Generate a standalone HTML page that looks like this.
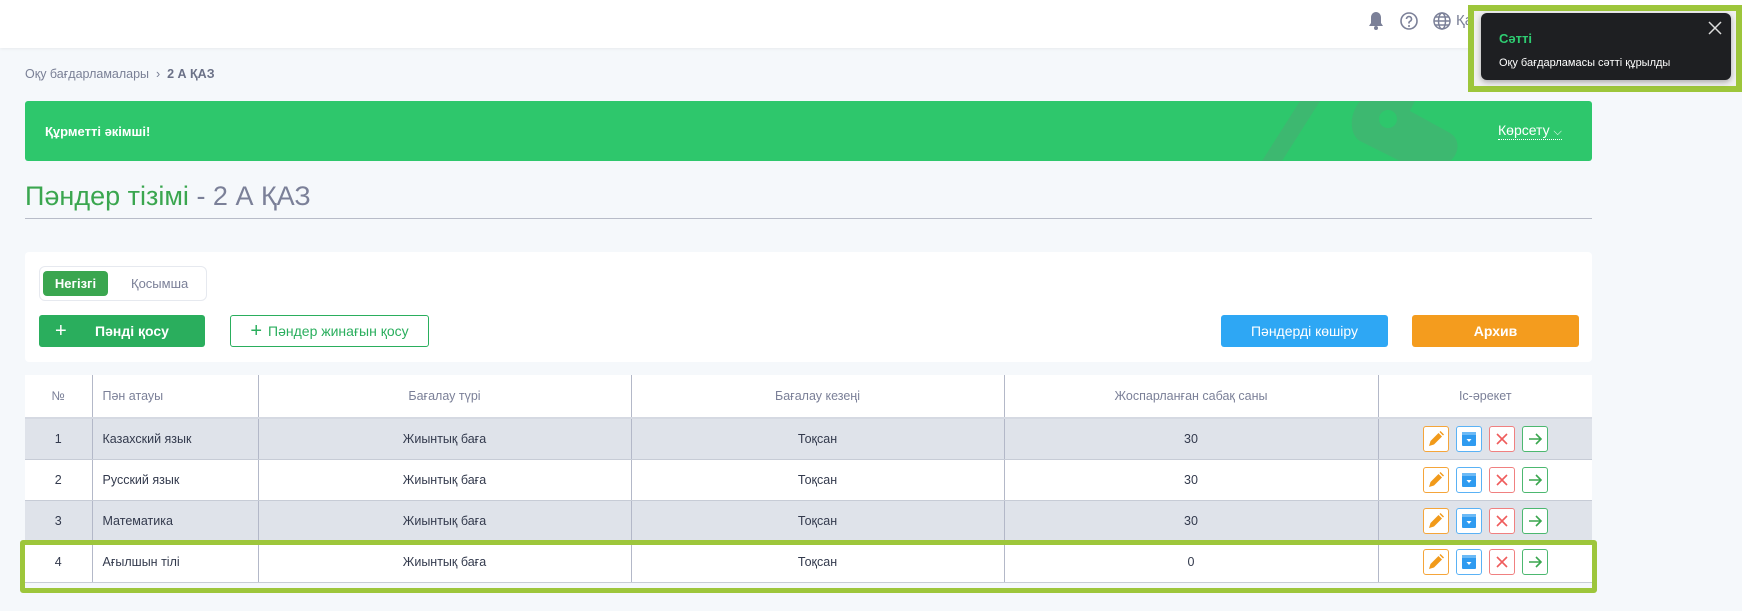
<!DOCTYPE html>
<html><head><meta charset="utf-8"><style>
*{box-sizing:border-box;margin:0;padding:0}
body{width:1742px;height:611px;background:#f5f8fb;font-family:"Liberation Sans","DejaVu Sans",sans-serif;position:relative;overflow:hidden;color:#3b4256}
.abs{position:absolute}
.hdr{left:0;top:0;width:1742px;height:48px;background:#fff;box-shadow:0 1px 3px rgba(0,0,0,.06)}
.bc{left:25px;top:67px;font-size:12.5px;color:#7a8096}
.bc b{color:#6b7187}
.banner{left:25px;top:101px;width:1567px;height:60px;background:#2ec76c;border-radius:3px;overflow:hidden}
.title{left:25px;top:181px;font-size:27px;color:#3aa64f}
.title span{color:#7b8098}
.uline{left:25px;top:218px;width:1567px;height:1px;background:#b8bcc8}
.card{left:25px;top:252px;width:1567px;height:110px;background:#fff;border-radius:4px}
.btn{position:absolute;height:32px;border-radius:3px;font-size:14px;display:flex;align-items:center;justify-content:center}
table{position:absolute;left:25px;top:375px;width:1567px;border-collapse:collapse;background:#fff;font-size:12.5px}
td,th{border-left:1px solid #b3b8c8;text-align:center;height:41px;color:#333a4d;font-weight:normal}
th{height:43px;color:#7b8098;border-bottom:2px solid #d5d9e2}
td:first-child,th:first-child{border-left:none}
tr.g td{background:#dfe3ea}
tr td{border-bottom:1px solid #c7ccd6}
.l{text-align:left;padding-left:10px}
.acts{display:flex;gap:7px;justify-content:center}
.a{width:26px;height:26px;border:1.5px solid;border-radius:3px;display:flex;align-items:center;justify-content:center;background:#fff}
</style></head><body>
<div class="abs hdr"></div>
<svg class="abs" style="left:1367px;top:11px" width="18" height="20" viewBox="0 0 18 20"><path d="M9 1c-3 0-5 2.5-5 5.5V12L2 15h14l-2-3V6.5C14 3.5 12 1 9 1z" fill="#7b8098"/><circle cx="9" cy="17" r="2" fill="#7b8098"/></svg>
<svg class="abs" style="left:1399px;top:11px" width="20" height="20" viewBox="0 0 20 20"><circle cx="10" cy="10" r="8" fill="none" stroke="#7b8098" stroke-width="1.6"/><path d="M7.5 8a2.5 2.5 0 1 1 3.5 2.3c-.7.3-1 .8-1 1.5V12.5" fill="none" stroke="#7b8098" stroke-width="1.6"/><circle cx="10" cy="15" r="1" fill="#7b8098"/></svg>
<svg class="abs" style="left:1432px;top:11px" width="20" height="20" viewBox="0 0 20 20" fill="none" stroke="#7b8098" stroke-width="1.5"><circle cx="10" cy="10" r="8"/><ellipse cx="10" cy="10" rx="3.5" ry="8"/><path d="M2 10h16M3.5 6h13M3.5 14h13"/></svg>
<div class="abs" style="left:1456px;top:12px;font-size:15px;color:#7b8098">Қазақша</div>
<div class="abs bc">Оқу бағдарламалары &nbsp;›&nbsp; <b>2 А ҚАЗ</b></div>
<div class="abs banner">
<svg class="abs" style="left:1180px;top:0" width="260" height="60"><path d="M95 0h20l-38 60h-20z" fill="#3db870"/><path d="M155 0h55l-5 10 40 22c10 6 10 20 0 28h-50l-40-20c-10-6-12-25 0-40z" fill="#3db870"/><circle cx="183" cy="18" r="9" fill="#2ec76c"/></svg>
<div class="abs" style="left:20px;top:23px;color:#fff;font-weight:bold;font-size:13px">Құрметті әкімші!</div>
<div class="abs" style="left:1473px;top:21px;color:#fff;font-size:14px;border-bottom:1px dotted #fff">Көрсету <span style="font-size:11px">⌵</span></div>
</div>
<div class="abs title">Пәндер тізімі <span>- 2 А ҚАЗ</span></div>
<div class="abs uline"></div>
<div class="abs card"></div>
<div class="abs" style="left:39px;top:266px;width:168px;height:35px;border:1px solid #e6e9ef;border-radius:6px;background:#fff"></div>
<div class="abs" style="left:43px;top:271px;width:65px;height:25px;background:#3aa64f;border-radius:4px;color:#fff;font-weight:bold;font-size:13px;text-align:center;line-height:25px">Негізгі</div>
<div class="abs" style="left:131px;top:276px;color:#7b8098;font-size:13px">Қосымша</div>
<div class="btn" style="left:39px;top:315px;width:166px;background:#2aae5d;color:#fff;font-weight:bold"><span style="position:absolute;left:16px;font-size:20px;font-weight:normal">+</span><span style="margin-left:20px">Пәнді қосу</span></div>
<div class="btn" style="left:230px;top:315px;width:199px;border:1.5px solid #2aae5d;color:#2aae5d;background:#fff"><span style="font-size:20px;margin-right:6px">+</span>Пәндер жинағын қосу</div>
<div class="btn" style="left:1221px;top:315px;width:167px;background:#2ea7f4;color:#fff">Пәндерді көшіру</div>
<div class="btn" style="left:1412px;top:315px;width:167px;background:#f49c1e;color:#fff;font-weight:bold">Архив</div>
<table>
<tr><th style="width:67px">№</th><th class="l" style="width:166px">Пән атауы</th><th style="width:373px">Бағалау түрі</th><th style="width:373px">Бағалау кезеңі</th><th style="width:374px">Жоспарланған сабақ саны</th><th>Іс-әрекет</th></tr>
<tr class="g"><td>1</td><td class="l">Казахский язык</td><td>Жиынтық баға</td><td>Тоқсан</td><td>30</td><td>ACT</td></tr>
<tr><td>2</td><td class="l">Русский язык</td><td>Жиынтық баға</td><td>Тоқсан</td><td>30</td><td>ACT</td></tr>
<tr class="g"><td>3</td><td class="l">Математика</td><td>Жиынтық баға</td><td>Тоқсан</td><td>30</td><td>ACT</td></tr>
<tr><td>4</td><td class="l">Ағылшын тілі</td><td>Жиынтық баға</td><td>Тоқсан</td><td>0</td><td>ACT</td></tr>
</table>
<div class="abs" style="left:20px;top:540px;width:1577px;height:53px;border:5px solid #9dc63b;border-radius:3px"></div>
<div class="abs" style="left:1468px;top:5px;width:274px;height:87px;border:6px solid #9dc63b;background:#f0f0f0"></div>
<div class="abs" style="left:1481px;top:13px;width:250px;height:67px;background:#1e1f22;border-radius:6px;box-shadow:0 2px 6px rgba(0,0,0,.3)">
<div class="abs" style="left:18px;top:18px;color:#2ecc71;font-weight:bold;font-size:13px">Сәтті</div>
<div class="abs" style="left:18px;top:44px;color:#fff;font-size:11px">Оқу бағдарламасы сәтті құрылды</div>
<svg class="abs" style="left:227px;top:8px" width="14" height="14"><path d="M1 1l12 12M13 1L1 13" stroke="#ddd" stroke-width="1.5"/></svg>
</div>
<script>
var h='<div class="acts"><div class="a" style="border-color:#f5a53a"><svg width="18" height="18" viewBox="0 0 18 18"><path d="M2 16l1.5-5 8-8 3.5 3.5-8 8z" fill="#f19a1a"/><path d="M12.5 2l1-1 3.5 3.5-1 1z" fill="#f19a1a"/></svg></div><div class="a" style="border-color:#5ab2f5"><svg width="18" height="18" viewBox="0 0 18 18"><rect x="2" y="2" width="14" height="14" rx="1" fill="#2f9bf0"/><rect x="2" y="2" width="14" height="3" fill="#6cbaf6"/><path d="M6.5 9h5l-2.5 3z" fill="#fff"/></svg></div><div class="a" style="border-color:#f08080"><svg width="14" height="14"><path d="M2 2l10 10M12 2L2 12" stroke="#ef5c5c" stroke-width="1.6"/></svg></div><div class="a" style="border-color:#4cb870"><svg width="16" height="14"><path d="M2 7h12M9 2l5 5-5 5" fill="none" stroke="#3aa64f" stroke-width="1.6"/></svg></div></div>';
document.querySelectorAll('td').forEach(function(t){if(t.textContent=='ACT')t.innerHTML=h;});
</script>
</body></html>
